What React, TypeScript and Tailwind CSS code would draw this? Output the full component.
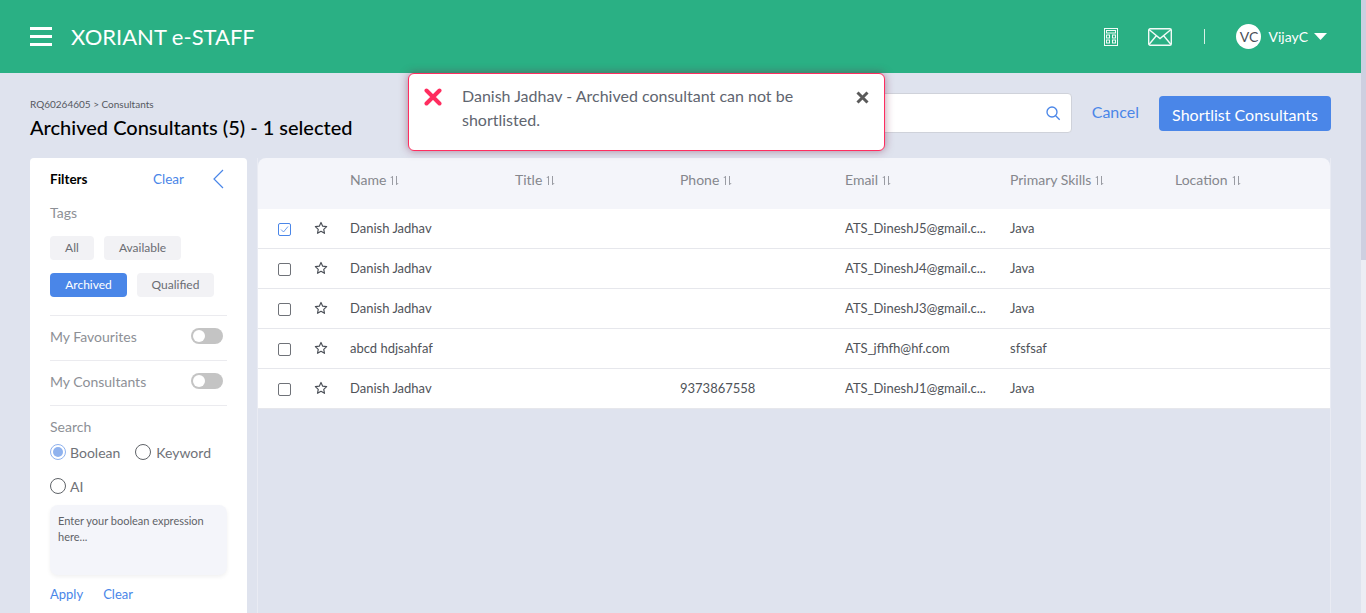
import React from "react";

function SortIcon() {
  return (
    <svg width="9" height="11" viewBox="0 0 9 11" className="ml-[4px] mt-[1px]" fill="none" stroke="#9a9ca3" strokeWidth="1">
      <path d="M2.5 10V1.2M0.8 3L2.5 1.2" />
      <path d="M6.5 1V9.8M8.2 8L6.5 9.8" />
    </svg>
  );
}

function Star() {
  return (
    <svg width="14" height="14" viewBox="0 0 24 24" fill="none" stroke="#4a4f57" strokeWidth="2" strokeLinejoin="round" className="-mt-[1px]">
      <path d="M12 2.5l2.9 6.3 6.8.8-5 4.7 1.3 6.8-6-3.4-6 3.4 1.3-6.8-5-4.7 6.8-.8z" />
    </svg>
  );
}

function Toggle() {
  return (
    <div className="relative w-[32px] h-[16px] rounded-full bg-[#c4c4c4] mr-[4px]">
      <div className="absolute left-[2px] top-[2px] w-[12px] h-[12px] rounded-full bg-white" />
    </div>
  );
}

function Radio({ on }: { on?: boolean }) {
  return on ? (
    <span className="w-[16px] h-[16px] rounded-full border border-[#8fb2ee] flex items-center justify-center">
      <span className="w-[10px] h-[10px] rounded-full bg-[#8fb2ee]" />
    </span>
  ) : (
    <span className="w-[16px] h-[16px] rounded-full border border-[#5f6368]" />
  );
}

const cols = ["Name", "Title", "Phone", "Email", "Primary Skills", "Location"];
const rows = [
  { name: "Danish Jadhav", phone: "", email: "ATS_DineshJ5@gmail.c...", skill: "Java", checked: true },
  { name: "Danish Jadhav", phone: "", email: "ATS_DineshJ4@gmail.c...", skill: "Java" },
  { name: "Danish Jadhav", phone: "", email: "ATS_DineshJ3@gmail.c...", skill: "Java" },
  { name: "abcd hdjsahfaf", phone: "", email: "ATS_jfhfh@hf.com", skill: "sfsfsaf" },
  { name: "Danish Jadhav", phone: "9373867558", email: "ATS_DineshJ1@gmail.c...", skill: "Java" },
];

export default function App() {
  return (
    <div className="relative h-[613px] w-[1366px] overflow-hidden flex bg-[#dfe3ee] font-['Lato',sans-serif]">
      <div className="w-[1361px] flex flex-col">
        <header className="h-[73px] shrink-0 bg-[#2ab084] flex items-center pl-[30px] pr-[34px] text-white">
          <div className="w-[22px] flex flex-col gap-[5px]">
            <div className="h-[3px] bg-white" />
            <div className="h-[3px] bg-white" />
            <div className="h-[3px] bg-white" />
          </div>
          <div className="ml-[19px] text-[22px] leading-none">XORIANT e-STAFF</div>
          <div className="ml-auto flex items-center">
            <svg width="14" height="18" viewBox="0 0 14 18" fill="none" stroke="#f2fbf7" strokeWidth="1">
              <rect x="0.5" y="0.5" width="13" height="17" />
              <rect x="2.5" y="2.5" width="9" height="2.5" />
              <rect x="2.5" y="7" width="3" height="3" />
              <rect x="8.5" y="7" width="3" height="3" />
              <rect x="2.5" y="12" width="3" height="3" />
              <rect x="8.5" y="12" width="3" height="3" />
            </svg>
            <svg width="24" height="18" viewBox="0 0 24 18" fill="none" stroke="#f2fbf7" strokeWidth="1.4" className="ml-[30px]">
              <rect x="0.7" y="0.7" width="22.6" height="16.6" rx="1.5" />
              <path d="M1 1.5L12 10.5L23 1.5M1 16.5L8.5 7.5M23 16.5L15.5 7.5" />
            </svg>
            <div className="ml-[32px] w-px h-[15px] bg-[#d9f0e7]" />
            <div className="ml-[31px] w-[25px] h-[25px] rounded-full bg-white text-[#4a4f57] text-[14px] flex items-center justify-center">VC</div>
            <div className="ml-[7px] text-[14px]">VijayC</div>
            <svg width="13" height="7" viewBox="0 0 13 7" className="ml-[6px]" fill="#fff"><path d="M0 0H13L6.5 7z" /></svg>
          </div>
        </header>

        <div className="flex items-start pl-[30px] pr-[30px] h-[85px] shrink-0">
          <div className="pt-[25px]">
            <div className="text-[10px] leading-[12px] text-[#55585f]">RQ60264605 &gt; Consultants</div>
            <div className="mt-[5px] text-[20px] leading-[24px] text-black font-medium">Archived Consultants (5) - 1 selected</div>
          </div>
          <div className="ml-auto flex items-start">
            <div className="mt-[20px] w-[260px] h-[40px] bg-white border border-[#cfd2da] rounded-[4px] flex items-center justify-end pr-[10px]">
              <svg width="16" height="16" viewBox="0 0 24 24" fill="none" stroke="#4a86e8" strokeWidth="2"><circle cx="10.5" cy="10.5" r="7.5" /><path d="M16 16l6 6" /></svg>
            </div>
            <div className="mt-[29px] ml-[20px] text-[16px] leading-[20px] text-[#4a86e8]">Cancel</div>
            <div className="mt-[23px] ml-[20px] w-[172px] h-[35px] pt-[2px] bg-[#4a86e8] rounded-[4px] text-white text-[16px] flex items-center justify-center">Shortlist Consultants</div>
          </div>
        </div>

        <div className="flex-1 flex pl-[30px] pr-[30px] gap-[10px] min-h-0">
          <aside className="w-[217px] shrink-0 bg-white rounded-t-[4px] px-[20px] h-[480px]">
            <div className="flex items-center h-[42px]">
              <div className="text-[13.5px] font-bold text-black">Filters</div>
              <div className="ml-auto text-[13.5px] text-[#4a86e8]">Clear</div>
              <svg width="12" height="20" viewBox="0 0 12 20" fill="none" stroke="#4a86e8" strokeWidth="1.2" className="ml-[28px] mr-[3px]"><path d="M11 1L2 10L11 19" /></svg>
            </div>
            <div className="text-[14px] leading-[18px] text-[#8d9096] mt-[4px]">Tags</div>
            <div className="flex flex-wrap gap-x-[10px] gap-y-[13px] mt-[14px]">
              <div className="h-[24px] w-[44px] rounded-[4px] bg-[#f2f2f5] text-[12px] text-[#6a6d73] flex items-center justify-center">All</div>
              <div className="h-[24px] w-[77px] rounded-[4px] bg-[#f2f2f5] text-[12px] text-[#6a6d73] flex items-center justify-center">Available</div>
              <div className="h-[24px] w-[77px] rounded-[4px] bg-[#4a86e8] text-[12px] text-white flex items-center justify-center">Archived</div>
              <div className="h-[24px] w-[77px] rounded-[4px] bg-[#f2f2f5] text-[12px] text-[#6a6d73] flex items-center justify-center">Qualified</div>
            </div>
            <div className="mt-[18px] border-t border-[#ebebef] h-[45px] pb-[4px] flex items-center justify-between">
              <span className="text-[14px] text-[#8d9096]">My Favourites</span>
              <div><Toggle /></div>
            </div>
            <div className="border-t border-[#ebebef] h-[45px] pb-[4px] flex items-center justify-between">
              <span className="text-[14px] text-[#8d9096]">My Consultants</span>
              <div><Toggle /></div>
            </div>
            <div className="border-t border-[#ebebef] pt-[12px]">
              <div className="text-[14px] leading-[18px] text-[#8d9096]">Search</div>
              <div className="flex items-center h-[20px] mt-[6px] text-[14px] text-[#6f7278]">
                <Radio on /><span className="ml-[4px]">Boolean</span>
                <span className="ml-[15px] flex items-center"><Radio /><span className="ml-[5px]">Keyword</span></span>
              </div>
              <div className="flex items-center h-[20px] mt-[14px] text-[14px] text-[#6f7278]">
                <Radio /><span className="ml-[4px]">AI</span>
              </div>
              <div className="mt-[9px] h-[70px] rounded-[8px] bg-[#f4f5fa] shadow-[0_2px_4px_rgba(0,0,0,0.06)] px-[8px] py-[8px] text-[11px] leading-[16px] text-[#5f6368]">
                Enter your boolean expression here...
              </div>
              <div className="mt-[10px] flex gap-[20px] text-[13px] text-[#4a86e8]">
                <span>Apply</span><span>Clear</span>
              </div>
            </div>
          </aside>

          <main className="flex-1 min-w-0 border-x border-[#e9ebf3]">
            <div className="bg-[#f4f5fa] h-[51px] rounded-t-[8px] flex items-center pl-[92px] text-[14px] text-[#85878d]">
              {cols.map((c) => (
                <div key={c} className="w-[165px] last:w-[150px] flex items-center -mt-[8px]">{c}<SortIcon /></div>
              ))}
            </div>
            {rows.map((r, i) => (
              <div key={i} className="h-[40px] bg-white border-b border-[#e6e7ec] flex items-center text-[13px] text-[#4f5359]">
                <div className="w-[56px] pl-[20px] mt-[1px] flex">
                  {r.checked ? (
                    <div className="w-[13px] h-[13px] border border-[#4a86e8] rounded-[2px] flex items-center justify-center">
                      <svg width="9" height="9" viewBox="0 0 9 9" fill="none" stroke="#4a86e8" strokeWidth="0.8"><path d="M1 4.5L3.5 7L8 1.5" /></svg>
                    </div>
                  ) : (
                    <div className="w-[13px] h-[13px] border border-[#6f7278] rounded-[2px]" />
                  )}
                </div>
                <div className="w-[36px] flex"><Star /></div>
                <div className="w-[165px]">{r.name}</div>
                <div className="w-[165px]" />
                <div className="w-[165px]">{r.phone}</div>
                <div className="w-[165px]">{r.email}</div>
                <div className="w-[165px]">{r.skill}</div>
              </div>
            ))}
          </main>
        </div>
      </div>

      <div className="w-[5px] bg-[#ecedf4]">
        <div className="h-[260px] bg-[#cdcfe0]" />
      </div>

      <div className="absolute left-[408px] top-[73px] w-[477px] h-[78px] bg-white border border-[#ff2d5f] rounded-[6px] shadow-[0_0_8px_rgba(120,30,70,0.5)] flex items-start">
        <svg width="18" height="18" viewBox="0 0 18 18" stroke="#ff2d5f" strokeWidth="4" strokeLinecap="round" className="ml-[15px] mt-[14px] shrink-0">
          <path d="M2.5 2.5L15.5 15.5M15.5 2.5L2.5 15.5" />
        </svg>
        <div className="ml-[20px] mt-[10px] w-[370px] text-[16px] leading-[24px] text-[#60656f]">
          Danish Jadhav - Archived consultant can not be shortlisted.
        </div>
        <svg width="13" height="13" viewBox="0 0 13 13" stroke="#5a5a5a" strokeWidth="3" className="ml-auto mr-[15px] mt-[17px] shrink-0">
          <path d="M1.5 1.5L11.5 11.5M11.5 1.5L1.5 11.5" />
        </svg>
      </div>
    </div>
  );
}
